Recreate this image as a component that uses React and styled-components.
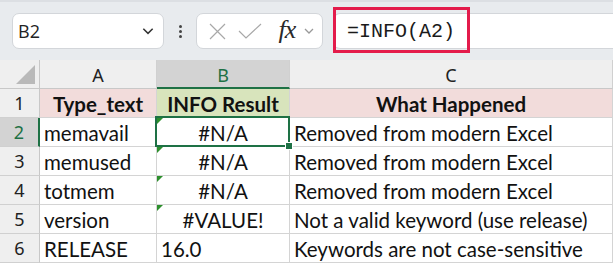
import React from "react";
import styled, { createGlobalStyle } from "styled-components";

const GlobalStyle = createGlobalStyle`
  html, body {
    margin: 0;
    padding: 0;
    background: #ffffff;
    overflow: hidden;
  }
`;

const GREEN = "#1e7145";
const LINE = "#d4d4d4";

const Page = styled.div`
  width: 613px;
  height: 269px;
  overflow: hidden;
  font-family: "Segoe UI", "Noto Sans", sans-serif;
`;

const Toolbar = styled.div`
  height: 60px;
  box-sizing: border-box;
  background: #e8ebee;
  border-top: 2px solid #dcdfe3;
  display: flex;
  align-items: center;
  padding-left: 12px;
`;

const Box = styled.div`
  height: 36px;
  box-sizing: border-box;
  background: #ffffff;
  border: 1px solid #d3d6da;
  border-radius: 7px;
  display: flex;
  align-items: center;
`;

const NameBox = styled(Box)`
  width: 152px;
  padding: 0 8px 0 5px;
  justify-content: space-between;
  font-family: "Open Sans", "Noto Sans", sans-serif;
  font-size: 18px;
  color: #222;
`;

const Dots = styled.div`
  width: 32px;
  display: flex;
  flex-direction: column;
  align-items: center;
  gap: 2px;
  span {
    width: 3px;
    height: 3px;
    border-radius: 50%;
    background: #444;
  }
`;

const FxBox = styled(Box)`
  width: 127px;
  padding: 0 4px 0 10px;
`;

const IconSlot = styled.div`
  width: ${({ w }) => w}px;
  display: flex;
  align-items: center;
  justify-content: center;
`;

const Fx = styled.span`
  font-family: "Liberation Serif", "DejaVu Serif", serif;
  font-style: italic;
  font-size: 26px;
  color: #2a2a2a;
  letter-spacing: -1px;
  margin-top: -2px;
`;

const FormulaBox = styled(Box)`
  margin-left: 10px;
  flex: 1;
  border-right: none;
  border-radius: 7px 0 0 7px;
  overflow: visible;
`;

const Highlight = styled.div`
  margin: -7px 0 -5px -1px;
  height: 46px;
  width: 137px;
  box-sizing: border-box;
  border: 3px solid #e31b4b;
  display: flex;
  align-items: center;
  padding: 2px 0 0 11px;
  font-family: "Liberation Mono", "DejaVu Sans Mono", monospace;
  font-size: 20px;
  color: #1a1a1a;
`;

const Sheet = styled.div`
  display: grid;
  grid-template-columns: 40px 117px 133px 1fr;
  grid-auto-rows: 29px;
`;

const Corner = styled.div`
  background: #efefef;
  border-right: 1px solid #c8c8c8;
  border-bottom: 1px solid #c8c8c8;
  box-sizing: border-box;
  position: relative;
  &::after {
    content: "";
    position: absolute;
    right: 4px;
    bottom: 4px;
    width: 19px;
    height: 19px;
    background: #b9b9b9;
    clip-path: polygon(100% 0, 100% 100%, 0 100%);
  }
`;

const ColHead = styled.div`
  box-sizing: border-box;
  background: ${({ active }) => (active ? "#d3d3d3" : "#efefef")};
  color: ${({ active }) => (active ? GREEN : "#222")};
  border-right: 1px solid #d0d0d0;
  border-bottom: ${({ active }) =>
    active ? `2px solid ${GREEN}` : "1px solid #c8c8c8"};
  display: flex;
  align-items: center;
  justify-content: center;
  font-size: 18px;
  padding-top: 2px;
`;

const RowHead = styled.div`
  box-sizing: border-box;
  background: ${({ active }) => (active ? "#d3d3d3" : "#efefef")};
  color: ${({ active }) => (active ? GREEN : "#222")};
  border-right: ${({ active }) =>
    active ? `2px solid ${GREEN}` : "1px solid #c8c8c8"};
  border-bottom: 1px solid #d0d0d0;
  display: flex;
  align-items: center;
  justify-content: center;
  font-size: 18px;
`;

const Cell = styled.div`
  position: relative;
  box-sizing: border-box;
  border-right: 1px solid ${LINE};
  border-bottom: 1px solid ${LINE};
  background: ${({ fill }) => fill || "#ffffff"};
  display: flex;
  align-items: center;
  justify-content: ${({ center }) => (center ? "center" : "flex-start")};
  padding: 1px 4px 0 4px;
  font-family: "Lato", "Open Sans", sans-serif;
  font-size: 20.5px;
  font-weight: ${({ bold }) => (bold ? 700 : 400)};
  color: #111;
  white-space: nowrap;
  overflow: visible;
`;

const ErrorMark = styled.span`
  position: absolute;
  left: 0;
  top: 0;
  width: 6px;
  height: 6px;
  background: #2d8f2d;
  clip-path: polygon(0 0, 100% 0, 0 100%);
`;

const Selection = styled.div`
  position: absolute;
  z-index: 2;
  left: -2px;
  top: -2px;
  right: -1px;
  bottom: -1px;
  border: 2px solid ${GREEN};
  pointer-events: none;
  &::after {
    content: "";
    position: absolute;
    right: -5px;
    bottom: -5px;
    width: 6px;
    height: 6px;
    background: ${GREEN};
    border: 1px solid #fff;
  }
`;

const Chevron = ({ size = 12, color = "#444" }) => (
  <svg width={size} height={size} viewBox="0 0 12 12">
    <path d="M2 4l4 4 4-4" fill="none" stroke={color} strokeWidth="1.3" />
  </svg>
);

const Cross = () => (
  <svg width="17" height="17" viewBox="0 0 17 17">
    <path d="M1 1l15 15M16 1L1 16" stroke="#a8a8a8" strokeWidth="1.2" />
  </svg>
);

const Check = () => (
  <svg width="24" height="16" viewBox="0 0 24 16">
    <path d="M1 8l7 7L23 1" fill="none" stroke="#a8a8a8" strokeWidth="1.2" />
  </svg>
);

const rows = [
  ["memavail", "#N/A", "Removed from modern Excel", true],
  ["memused", "#N/A", "Removed from modern Excel", true],
  ["totmem", "#N/A", "Removed from modern Excel", true],
  ["version", "#VALUE!", "Not a valid keyword (use release)", true],
  ["RELEASE", "16.0", "Keywords are not case-sensitive", false],
];

export default function App() {
  return (
    <Page>
      <GlobalStyle />
      <Toolbar>
        <NameBox>
          <span>B2</span>
          <Chevron size={14} color="#333" />
        </NameBox>
        <Dots>
          <span />
          <span />
          <span />
        </Dots>
        <FxBox>
          <IconSlot w={20}>
            <Cross />
          </IconSlot>
          <IconSlot w={46}>
            <Check />
          </IconSlot>
          <IconSlot w={28}>
            <Fx>fx</Fx>
          </IconSlot>
          <IconSlot w={16}>
            <Chevron size={12} color="#999" />
          </IconSlot>
        </FxBox>
        <FormulaBox>
          <Highlight>=INFO(A2)</Highlight>
        </FormulaBox>
      </Toolbar>
      <Sheet>
        <Corner />
        <ColHead>A</ColHead>
        <ColHead active>B</ColHead>
        <ColHead>C</ColHead>

        <RowHead>1</RowHead>
        <Cell center bold fill="#f2dcdb">Type_text</Cell>
        <Cell center bold fill="#d8e4bc">INFO Result</Cell>
        <Cell center bold fill="#f2dcdb">What Happened</Cell>

        {rows.map(([a, b, c, err], i) => (
          <React.Fragment key={a}>
            <RowHead active={i === 0}>{i + 2}</RowHead>
            <Cell>{a}</Cell>
            <Cell center={err}>
              {err && <ErrorMark />}
              {b}
              {i === 0 && <Selection />}
            </Cell>
            <Cell>{c}</Cell>
          </React.Fragment>
        ))}
      </Sheet>
    </Page>
  );
}
